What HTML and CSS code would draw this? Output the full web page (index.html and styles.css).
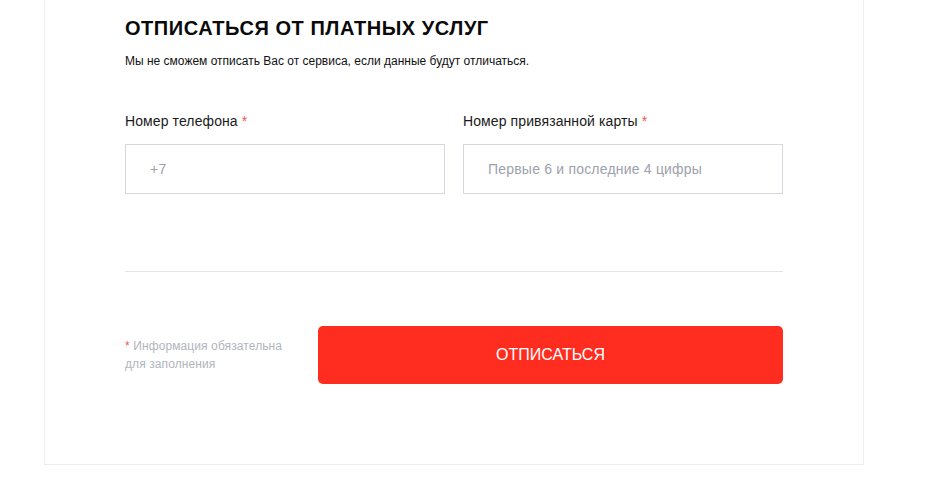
FILE: index.html
```html
<!DOCTYPE html>
<html lang="ru">
<head>
<meta charset="utf-8">
<title>Отписаться от платных услуг</title>
<link rel="stylesheet" href="styles.css">
</head>
<body>
<div class="card">
  <h1 class="title">ОТПИСАТЬСЯ ОТ ПЛАТНЫХ УСЛУГ</h1>
  <p class="subtitle">Мы не сможем отписать Вас от сервиса, если данные будут отличаться.</p>
  <div class="fields">
    <label class="field">
      <span class="label">Номер телефона <span class="req">*</span></span>
      <input class="input" type="text" placeholder="+7">
    </label>
    <label class="field">
      <span class="label">Номер привязанной карты <span class="req">*</span></span>
      <input class="input" type="text" placeholder="Первые 6 и последние 4 цифры">
    </label>
  </div>
  <div class="divider"></div>
  <div class="actions">
    <p class="note"><span class="req">*</span> Информация обязательна для заполнения</p>
    <button class="button" type="button">ОТПИСАТЬСЯ</button>
  </div>
</div>
</body>
</html>
```
FILE: styles.css
```css
html, body {
  margin: 0;
  padding: 0;
  background: #ffffff;
}
body {
  font-family: "Liberation Sans", Arial, sans-serif;
  color: #111111;
}
.card {
  box-sizing: border-box;
  width: 820px;
  margin-left: 44px;
  border: 1px solid #eeeeee;
  border-top: none;
  padding: 16px 80px 80px 80px;
  background: #ffffff;
}
.title {
  margin: 0;
  font-size: 20px;
  line-height: 24px;
  font-weight: bold;
  color: #0a0a0a;
  letter-spacing: 0.55px;
}
.subtitle {
  margin: 13px 0 0 0;
  font-size: 12px;
  line-height: 16px;
  color: #111111;
}
.fields {
  display: grid;
  grid-template-columns: 320px 320px;
  column-gap: 18px;
  margin-top: 42px;
}
.field {
  display: flex;
  flex-direction: column;
  gap: 13px;
}
.label {
  font-size: 14px;
  line-height: 20px;
  color: #1a1a1a;
  letter-spacing: 0.1px;
}
.req {
  color: #f0584e;
}
.input {
  box-sizing: border-box;
  width: 100%;
  height: 50px;
  margin: 0;
  border: 1px solid #d6d8de;
  border-radius: 0;
  padding: 0 24px;
  font-family: "Liberation Sans", Arial, sans-serif;
  font-size: 14px;
  letter-spacing: 0.2px;
  color: #1a1a1a;
  background: #ffffff;
  outline: none;
}
.input::placeholder {
  color: #9da1ab;
  opacity: 1;
}
.divider {
  height: 1px;
  background: #e4e4e4;
  margin-top: 77px;
}
.actions {
  display: flex;
  align-items: center;
  margin-top: 54px;
}
.note {
  flex: 0 0 173px;
  margin: 0 20px 0 0;
  font-size: 12px;
  line-height: 18px;
  color: #b1b5bd;
  letter-spacing: 0.1px;
}
.button {
  flex: 0 0 465px;
  height: 58px;
  margin: 0;
  border: none;
  border-radius: 5px;
  background: #ff2d1f;
  color: #ffffff;
  font-family: "Liberation Sans", Arial, sans-serif;
  font-size: 16px;
  cursor: pointer;
}
```
